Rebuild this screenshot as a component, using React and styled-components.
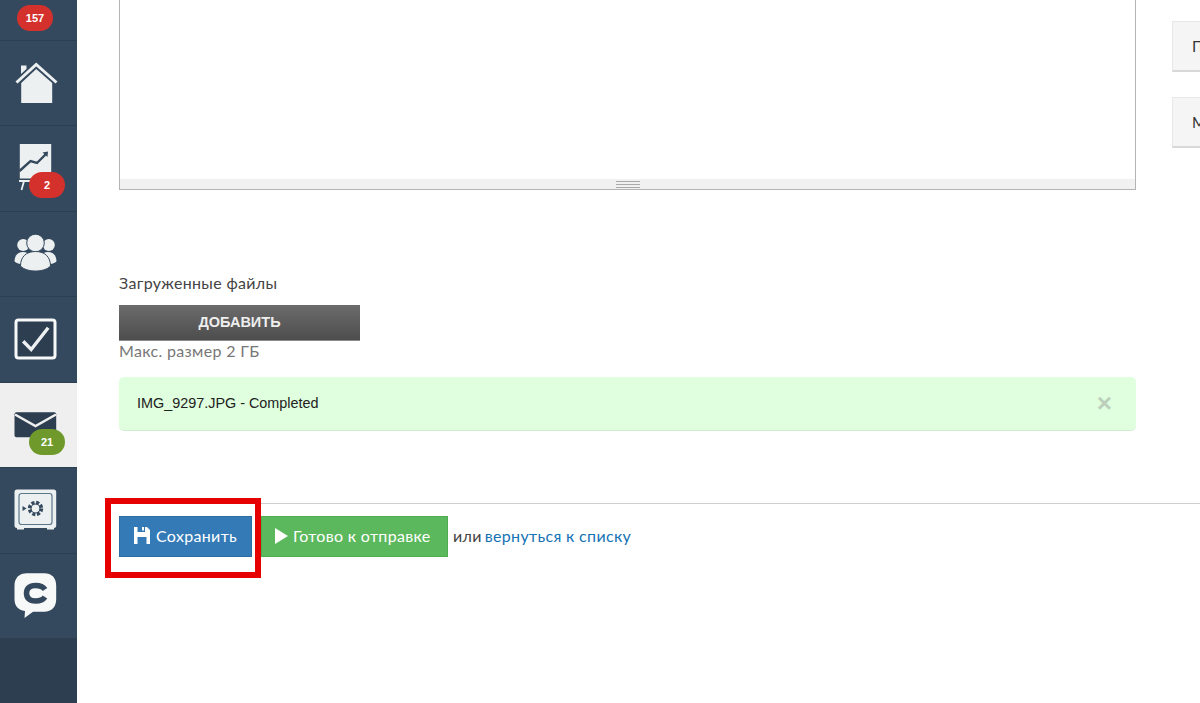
import React from 'react';
import styled, { createGlobalStyle } from 'styled-components';

const Global = createGlobalStyle`
  html, body { margin: 0; padding: 0; height: 100%; overflow: hidden; background: #fff; }
  * { box-sizing: border-box; }
  body { font-family: Lato, "Noto Sans", "Liberation Sans", sans-serif; color: #333; letter-spacing: .33px; }
`;

const light = '#ecf0f1';
const dark = '#34495e';

const Page = styled.div`
  display: flex;
  width: 1200px;
  height: 703px;
  overflow: hidden;
`;
const Sidebar = styled.nav`
  width: 77px;
  flex-shrink: 0;
  background: #2c3e50;
`;
const TopRow = styled.div`
  position: relative;
  height: 40.5px;
  background: ${dark};
  border-bottom: 1px solid #2c3e50;
`;
const NavRow = styled.div`
  position: relative;
  height: 85.5px;
  display: flex;
  align-items: center;
  justify-content: center;
  background: ${p => (p.$active ? '#efefef' : dark)};
  border-bottom: 1px solid #2c3e50;
`;
const Badge = styled.span`
  position: absolute;
  left: 17px;
  width: 36px;
  height: 26px;
  border-radius: 13px;
  background: ${p => (p.$green ? '#6f9a2b' : '#d5312c')};
  color: #fff;
  font: bold 11px/26px "Liberation Sans", sans-serif;
  letter-spacing: 0;
  text-align: center;
`;
const TopBadge = styled(Badge)`
  top: 5px;
`;
const RowBadge = styled(Badge)`
  left: 29px;
  top: 46px;
`;
const Icon = styled.svg`
  width: 48px;
  height: 48px;
  display: block;
  overflow: visible;
`;

const Main = styled.main`
  flex: 1;
  min-width: 0;
  overflow: hidden;
`;
const Upper = styled.div`
  display: flex;
  padding-left: 42px;
`;
const Content = styled.div`
  width: 1017px;
  flex-shrink: 0;
`;
const Editor = styled.div`
  height: 190px;
  border: 1px solid #b4b4b4;
  border-top: 0;
  display: flex;
  flex-direction: column;
  justify-content: flex-end;
`;
const StatusBar = styled.div`
  height: 10px;
  background: #f1f1f1;
  display: flex;
  justify-content: center;
  align-items: center;
`;
const Grip = styled.div`
  width: 24px;
  height: 7px;
  border-top: 1px solid #aaa;
  border-bottom: 1px solid #aaa;
  &::after {
    content: '';
    display: block;
    margin-top: 2px;
    height: 1px;
    background: #aaa;
  }
`;
const FilesLabel = styled.div`
  margin-top: 83px;
  font-size: 16px;
  line-height: 20px;
  color: #444;
`;
const AddButton = styled.div`
  margin-top: 12px;
  width: 241px;
  height: 36px;
  background: linear-gradient(#6c6c6c, #4d4d4d);
  border-bottom: 1px solid #8a8a8a;
  color: #eee;
  font: bold 14.5px/35px "Liberation Sans", sans-serif;
  letter-spacing: 0;
  text-align: center;
`;
const SizeNote = styled.div`
  font-size: 16px;
  line-height: 22px;
  color: #777;
  margin-top: -1px;
`;
const Alert = styled.div`
  margin-top: 15px;
  height: 54px;
  padding: 0 18px 2px;
  display: flex;
  align-items: center;
  justify-content: space-between;
  background: #dfffdf;
  border-bottom: 1px dotted #c4d8c4;
  border-radius: 5px;
  font: 14.4px "Liberation Sans", sans-serif;
  letter-spacing: 0;
  color: #222;
`;
const Close = styled.span`
  margin-right: 6px;
  color: #bccfbc;
  font: bold 26px/1 "Liberation Sans", sans-serif;
`;
const SideCol = styled.div`
  margin-left: 36px;
  padding-top: 21px;
  display: flex;
  flex-direction: column;
  gap: 25px;
  flex-shrink: 0;
`;
const SideButton = styled.div`
  width: 150px;
  height: 51px;
  padding-left: 19px;
  background: #f5f5f5;
  border: 1px solid #e8e8e8;
  border-bottom: 2px solid #d8d8d8;
  font-size: 15px;
  line-height: 48px;
  color: #333;
  white-space: nowrap;
`;
const Rule = styled.hr`
  margin: 72px 0 0 42px;
  border: 0;
  border-top: 1px solid #cfcfcf;
`;
const Actions = styled.div`
  position: relative;
  display: flex;
  align-items: center;
  padding: 12px 0 0 42px;
  font-size: 16px;
  line-height: 20px;
`;
const Button = styled.div`
  height: 41px;
  display: flex;
  align-items: center;
  padding-bottom: 2px;
  color: #fff;
  font-size: 16px;
  background: ${p => (p.$green ? '#5cb85c' : '#337ab7')};
  border: 1px solid ${p => (p.$green ? '#4cae4c' : '#2e6da4')};
`;
const SaveButton = styled(Button)`
  width: 133px;
  padding-left: 14px;
  gap: 6px;
`;
const SendButton = styled(Button)`
  width: 187px;
  margin-left: 9px;
  padding-left: 13px;
  gap: 5px;
`;
const Or = styled.span`
  margin-left: 5px;
  margin-top: -2px;
  color: #444;
`;
const BackLink = styled.a`
  margin-left: 3px;
  margin-top: -2px;
  color: #1672b5;
  text-decoration: none;
`;
const Highlight = styled.div`
  position: absolute;
  left: 28px;
  top: -6px;
  width: 156px;
  height: 80px;
  border: 6px solid #e60000;
`;

const HomeIcon = () => (
  <Icon viewBox="0 0 48 48">
    <path d="M6 6.5h5.5V10L6 15z" fill={light} />
    <path d="M1.500 23.500 21.200 5.500 41.500 23.500" fill="none" stroke={light} strokeWidth="3" />
    <path d="M6.200 24 21.200 10 37.200 24V44H6.200z" fill={light} />
  </Icon>
);
const ChartIcon = () => (
  <Icon viewBox="0 0 48 48">
    <rect x="4.800" y="0" width="31.400" height="34.500" fill={light} />
    <path d="M4.500 27 15.500 17 22 19 28 13 31 10" fill="none" stroke={dark} strokeWidth="2.400" />
    <path d="M27.500 8.500 33 7.500 32.500 13z" fill={dark} />
    <path d="M4 37H15M9 37 6.500 46" fill="none" stroke={light} strokeWidth="1.800" />
  </Icon>
);
const UsersIcon = () => (
  <Icon viewBox="0 0 48 48">
    <circle cx="8.200" cy="15" r="6" fill={light} />
    <circle cx="33.800" cy="15" r="6" fill={light} />
    <path d="M-.5 31C0 25 3 22 8 22s8 3 8 9l-7 3.500C4 34 0 33-.5 31z" fill={light} />
    <path d="M41.500 31C41 25 38 22 33 22s-8 3-8 9l7 3.500c5-.5 9-1.500 9.500-3.500z" fill={light} />
    <circle cx="20.500" cy="13" r="8.800" fill={light} stroke={dark} strokeWidth="1" />
    <path d="M5.500 36C5.500 27 11 21.500 20.500 21.500S35.500 27 35.500 36C32 40 25 41 20.500 41S9 40 5.500 36z" fill={light} stroke={dark} strokeWidth="1" />
  </Icon>
);
const CheckIcon = () => (
  <Icon viewBox="0 0 48 48">
    <rect x="1" y="5" width="39" height="38" rx="2.500" fill="#2c3e50" stroke="#f7f9f9" strokeWidth="3" />
    <path d="M8.200 26.200 16.200 34.500 33.200 12.800" fill="none" stroke={light} strokeWidth="3.400" />
  </Icon>
);
const MailIcon = () => (
  <Icon viewBox="0 0 48 48">
    <rect x="-.5" y="11.300" width="41.700" height="25" rx="2" fill="#2c3e50" />
    <path d="M0 13.500 20.500 25 41 13.500" fill="none" stroke="#efefef" strokeWidth="2.500" />
  </Icon>
);
const SafeIcon = () => (
  <Icon viewBox="0 0 48 48">
    <rect x="-.5" y="3.500" width="41.700" height="38.500" rx="2.500" fill={light} />
    <path d="M2 41h7v2.500H2zM32 41h7v2.500h-7z" fill={light} />
    <rect x="4" y="7.500" width="33" height="31" rx="2.500" fill="none" stroke="#5b778c" strokeWidth="1.200" />
    <circle cx="20.500" cy="22.500" r="6" fill="none" stroke={dark} strokeWidth="3.400" strokeDasharray="3 1.700" />
    <circle cx="20.500" cy="22.500" r="4.500" fill="none" stroke={dark} strokeWidth="1.200" />
    <path d="M7.500 20 11.500 22.500 7.500 25z" fill={dark} />
  </Icon>
);
const ChatIcon = () => (
  <Icon viewBox="0 0 48 48">
    <path d="M12 1.300H29C37 1.300 41.200 6 41.200 14V27C41.200 35 37 39.700 29 39.700H18L9.500 46 10 39C3 38-.5 34-.5 27V14C-.5 6 4 1.300 12 1.300z" fill="#f7f9f9" />
    <path d="M30 17.500C28 14.500 25 13.500 20.500 13.500C14 13.500 11.500 17 11.500 21.300S14 29 20.500 29C25 29 28 28 30 25" fill="none" stroke={dark} strokeWidth="5.500" />
  </Icon>
);
const SaveIcon = () => (
  <svg width="16" height="17" viewBox="0 0 16 17">
    <path
      fillRule="evenodd"
      d="M0 0H3.500V5H11V0H13L16 3V17H0ZM3.500 10V17H12.500V10Z"
      fill="#fff"
    />
    <rect x="8" y="0" width="2" height="3.500" fill="#fff" />
  </svg>
);
const PlayIcon = () => (
  <svg width="13" height="16" viewBox="0 0 13 16">
    <path d="M0 0 13 8 0 16z" fill="#fff" />
  </svg>
);

export default function App() {
  return (
    <Page>
      <Global />
      <Sidebar>
        <TopRow>
          <TopBadge>157</TopBadge>
        </TopRow>
        <NavRow><HomeIcon /></NavRow>
        <NavRow>
          <ChartIcon />
          <RowBadge>2</RowBadge>
        </NavRow>
        <NavRow><UsersIcon /></NavRow>
        <NavRow><CheckIcon /></NavRow>
        <NavRow $active>
          <MailIcon />
          <RowBadge $green>21</RowBadge>
        </NavRow>
        <NavRow><SafeIcon /></NavRow>
        <NavRow><ChatIcon /></NavRow>
      </Sidebar>
      <Main>
        <Upper>
          <Content>
            <Editor>
              <StatusBar><Grip /></StatusBar>
            </Editor>
            <FilesLabel>Загруженные файлы</FilesLabel>
            <AddButton>ДОБАВИТЬ</AddButton>
            <SizeNote>Макс. размер 2 ГБ</SizeNote>
            <Alert>
              IMG_9297.JPG - Completed
              <Close>×</Close>
            </Alert>
          </Content>
          <SideCol>
            <SideButton>Просмотр</SideButton>
            <SideButton>Макет</SideButton>
          </SideCol>
        </Upper>
        <Rule />
        <Actions>
          <SaveButton><SaveIcon />Сохранить</SaveButton>
          <SendButton $green><PlayIcon />Готово к отправке</SendButton>
          <Or>или</Or>
          <BackLink href="#">вернуться к списку</BackLink>
          <Highlight />
        </Actions>
      </Main>
    </Page>
  );
}
